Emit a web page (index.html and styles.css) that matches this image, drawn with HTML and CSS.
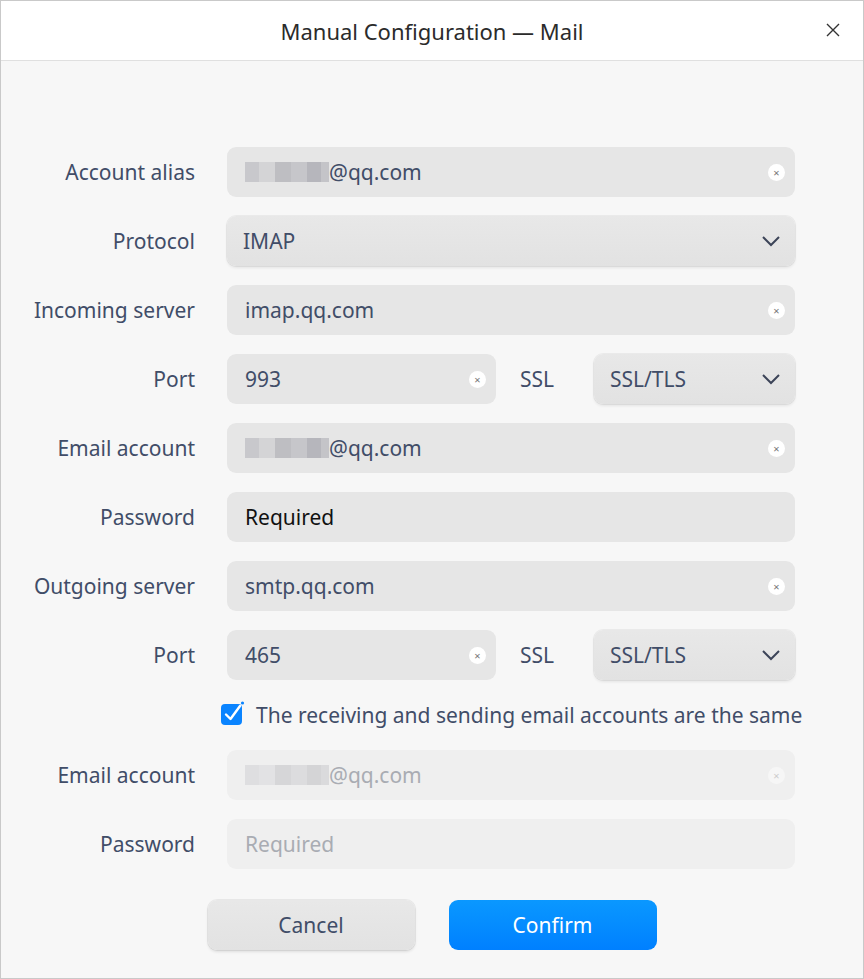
FILE: index.html
```html
<!DOCTYPE html>
<html>
<head>
<meta charset="utf-8">
<link rel="stylesheet" href="styles.css">
</head>
<body>
<div class="window">
  <header class="titlebar">
    <span class="title">Manual Configuration — Mail</span>
    <span class="close">
      <svg width="14" height="14" viewBox="0 0 14 14"><path d="M1 1L13 13M13 1L1 13" stroke="#333" stroke-width="1.4" fill="none"/></svg>
    </span>
  </header>
  <main class="content">
    <form class="form">
      <label class="lbl">Account alias</label>
      <div class="field"><span class="blur"></span><span class="val">@qq.com</span><span class="clear">×</span></div>

      <label class="lbl">Protocol</label>
      <div class="field select"><span class="val">IMAP</span><span class="chev"><svg width="20" height="12" viewBox="0 0 20 12"><path d="M2 2L10 10L18 2" stroke="#3c4458" stroke-width="2" fill="none"/></svg></span></div>

      <label class="lbl">Incoming server</label>
      <div class="field"><span class="val">imap.qq.com</span><span class="clear">×</span></div>

      <label class="lbl">Port</label>
      <div class="split">
        <div class="field port"><span class="val">993</span><span class="clear">×</span></div>
        <span class="ssl">SSL</span>
        <div class="field select ssl-sel"><span class="val">SSL/TLS</span><span class="chev"><svg width="20" height="12" viewBox="0 0 20 12"><path d="M2 2L10 10L18 2" stroke="#3c4458" stroke-width="2" fill="none"/></svg></span></div>
      </div>

      <label class="lbl">Email account</label>
      <div class="field"><span class="blur"></span><span class="val">@qq.com</span><span class="clear">×</span></div>

      <label class="lbl">Password</label>
      <div class="field"><span class="val dark">Required</span></div>

      <label class="lbl">Outgoing server</label>
      <div class="field"><span class="val">smtp.qq.com</span><span class="clear">×</span></div>

      <label class="lbl">Port</label>
      <div class="split">
        <div class="field port"><span class="val">465</span><span class="clear">×</span></div>
        <span class="ssl">SSL</span>
        <div class="field select ssl-sel"><span class="val">SSL/TLS</span><span class="chev"><svg width="20" height="12" viewBox="0 0 20 12"><path d="M2 2L10 10L18 2" stroke="#3c4458" stroke-width="2" fill="none"/></svg></span></div>
      </div>

      <div class="check-row">
        <span class="checkbox">
          <svg width="26" height="26" viewBox="0 0 26 26">
            <rect x="1" y="4" width="21" height="21" rx="4" fill="#0a84ff"/>
            <path d="M6 14.5L10.5 19L20 6" stroke="#fff" stroke-width="2.4" fill="none" stroke-linecap="round" stroke-linejoin="round"/>
            <circle cx="22.5" cy="3" r="1.6" fill="#0a84ff"/>
          </svg>
        </span>
        <span class="check-text">The receiving and sending email accounts are the same</span>
      </div>

      <label class="lbl">Email account</label>
      <div class="field disabled"><span class="blur light"></span><span class="val">@qq.com</span><span class="clear">×</span></div>

      <label class="lbl">Password</label>
      <div class="field disabled"><span class="val">Required</span></div>
    </form>
    <div class="buttons">
      <button type="button" class="btn cancel">Cancel</button>
      <button type="button" class="btn confirm">Confirm</button>
    </div>
  </main>
</div>
</body>
</html>
```

FILE: styles.css
```css
* { box-sizing: border-box; }
html, body { margin: 0; padding: 0; }
body {
  width: 864px;
  height: 979px;
  font-family: "Noto Sans", "Open Sans", sans-serif;
  background: #f7f7f7;
}
.window {
  width: 864px;
  height: 979px;
  border: 1px solid #c9c9c9;
  background: #f7f7f7;
  display: flex;
  flex-direction: column;
}
.titlebar {
  height: 60px;
  background: #fff;
  border-bottom: 1px solid #e0e0e0;
  display: flex;
  align-items: center;
  justify-content: center;
  position: relative;
  flex: none;
}
.title {
  font-size: 22px;
  color: #2b2b2b;
  margin-top: 1px;
}
.close {
  position: absolute;
  right: 23px;
  top: 22px;
  width: 14px;
  height: 14px;
  display: flex;
}
.content {
  padding-top: 86px;
  display: flex;
  flex-direction: column;
}
.form {
  display: grid;
  grid-template-columns: 194px 568px;
  column-gap: 32px;
  row-gap: 19px;
  align-items: center;
}
.lbl {
  text-align: right;
  font-size: 21px;
  color: #414d68;
}
.field {
  height: 50px;
  border-radius: 9px;
  background: #e6e6e6;
  display: flex;
  align-items: center;
  padding: 0 10px 0 18px;
  font-size: 21px;
  color: #414d68;
}
.field .val { flex: 1; }
.field .val.dark { color: #111; }
.blur {
  width: 84px;
  height: 20px;
  flex: none;
  background:
    linear-gradient(90deg, #c8c8cc 0 14px, #d4d4d6 14px 30px, #bebec2 30px 46px, #c6c6ca 46px 62px, #b6b6bc 62px 76px, #c4c4c8 76px 84px);
}
.blur.light {
  background:
    linear-gradient(90deg, #dedee0 0 14px, #e2e2e4 14px 30px, #d6d6d8 30px 46px, #dcdcde 46px 62px, #d4d4d6 62px 76px, #dadadc 76px 84px);
}
.clear {
  width: 17px;
  height: 17px;
  border-radius: 50%;
  background: #fff;
  color: #777;
  font-size: 11px;
  line-height: 17px;
  text-align: center;
  flex: none;
}
.select {
  background: linear-gradient(180deg, #e8e8e8, #e2e2e2);
  box-shadow: 0 0 0 1px rgba(0,0,0,0.05), 0 2px 3px rgba(0,0,0,0.08);
  padding-left: 16px;
  padding-right: 14px;
}
.chev { display: flex; }
.split {
  display: flex;
  align-items: center;
}
.port { width: 269px; flex: none; }
.ssl {
  font-size: 21px;
  color: #414d68;
  margin-left: 24px;
  width: 74px;
}
.ssl-sel { width: 201px; flex: none; }
.check-row {
  grid-column: 1 / 3;
  display: flex;
  align-items: center;
  height: 32px;
  padding-left: 219px;
  white-space: nowrap;
}
.checkbox { display: flex; margin-top: -4px; flex: none; }
.check-text {
  font-size: 21px;
  color: #414d68;
  margin-left: 10px;
  white-space: nowrap;
}
.disabled {
  background: #efefef;
  color: #a9acb3;
}
.disabled .clear { background: #f6f6f6; color: #ccc; }
.buttons {
  display: flex;
  justify-content: center;
  gap: 34px;
  margin-top: 31px;
}
.btn {
  width: 207px;
  height: 50px;
  border-radius: 9px;
  font-family: inherit;
  font-size: 21px;
  border: none;
}
.cancel {
  background: linear-gradient(180deg, #e8e8e8, #e2e2e2);
  color: #414d68;
  box-shadow: 0 0 0 1px rgba(0,0,0,0.06), 0 2px 3px rgba(0,0,0,0.1);
}
.confirm {
  background: linear-gradient(180deg, #0a98ff, #0080ff);
  color: #fff;
  width: 208px;
}
```
